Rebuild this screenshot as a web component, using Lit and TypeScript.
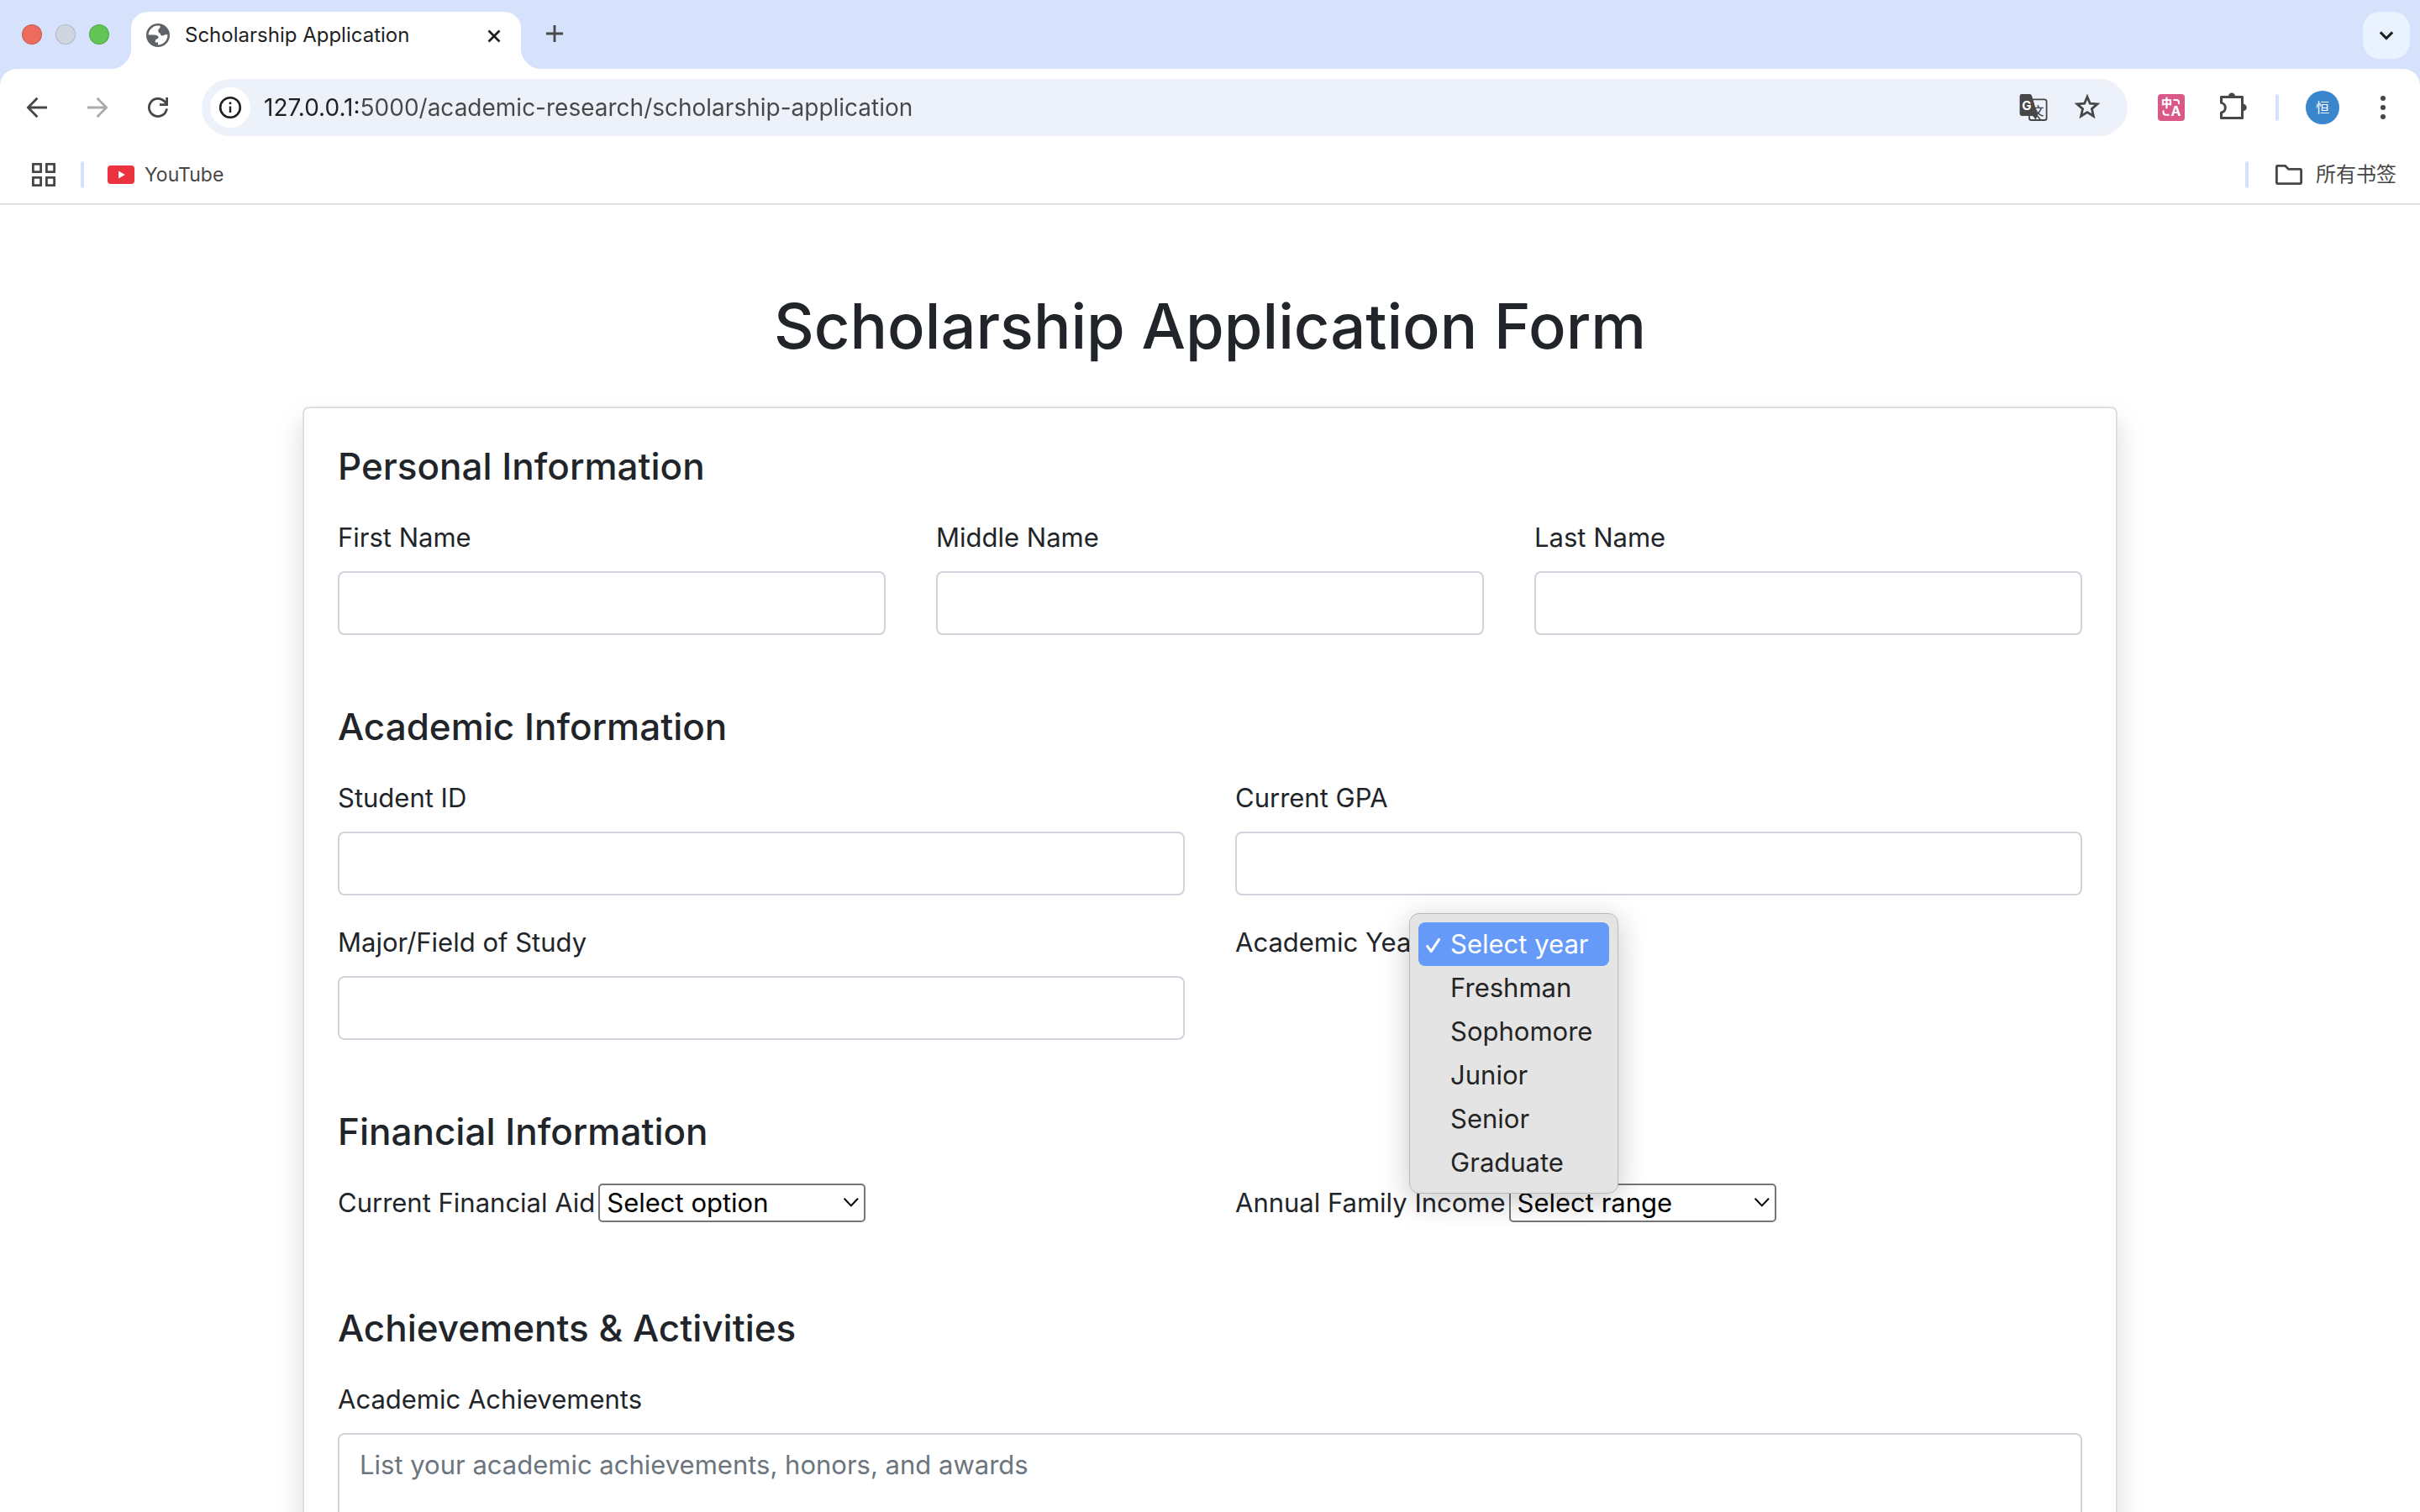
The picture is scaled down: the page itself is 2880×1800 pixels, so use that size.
import { LitElement, html, svg, css, nothing } from "lit";
import { customElement, state } from "lit/decorators.js";

const glyph = (body: unknown, size = 40) =>
  html`<svg class="glyph" width=${size} height=${size} viewBox="0 0 ${size} ${size}" aria-hidden="true">${body}</svg>`;

const icons = {
  globe: svg`
    <circle cx="14" cy="14" r="13" fill="#fff" />
    <path fill="#5f6368" d="M17 1.5L16.6 4.5C16.2 6 14.6 6.2 14.4 7.6V9.8C14.6 11.4 16.8 11 17 12.8C17.2 14.8 20.2 15 21.4 13.8C22.6 12.8 24.2 13.6 26.4 13A13 13 0 0 0 17 1.5Z" />
    <path fill="#5f6368" d="M1.8 13.6H8.4C11.2 13.6 14.6 14.4 14.6 16.6C14.6 18.8 11 18.2 10.8 20.6V22.4H14V26.4A12.8 12.8 0 0 1 1.8 13.6Z" />
    <circle cx="14" cy="14" r="12.7" fill="none" stroke="#5f6368" stroke-width="2.6" />`,
  close: svg`<path d="M13.5 14.5L26.5 27.5M26.5 14.5L13.5 27.5" stroke="#1f1f1f" stroke-width="2.8" fill="none" />`,
  plus: svg`<path d="M20 10V30M10 20H30" stroke="#474747" stroke-width="2.8" fill="none" />`,
  chevron: svg`<path d="M12.8 16.4L20 23.6L27.2 16.4" stroke="#1f1f1f" stroke-width="3" fill="none" />`,
  back: svg`<path d="M32 20H10M20.4 8.8L9.4 20L20.4 31.2" stroke="#474747" stroke-width="2.8" fill="none" />`,
  forward: svg`<path d="M8 20H30M19.6 8.8L30.6 20L19.6 31.2" stroke="#ababab" stroke-width="2.8" fill="none" />`,
  reload: svg`<path d="M30.5 21.4A10.6 10.6 0 1 1 27.6 12.6L30.4 15.4M30.6 8V16.6H22" stroke="#474747" stroke-width="2.8" fill="none" />`,
  info: svg`
    <circle cx="20" cy="20" r="11.8" stroke="#1f1f1f" stroke-width="2.6" fill="none" />
    <path d="M20 18.6V26" stroke="#1f1f1f" stroke-width="2.4" />
    <circle cx="20" cy="14.8" r="1.5" fill="#1f1f1f" />`,
  translate: svg`
    <rect x="15" y="10.4" width="20.6" height="24.6" rx="2.6" fill="none" stroke="#474747" stroke-width="1.8" />
    <text x="25.4" y="28.8" font-size="14" font-weight="500" text-anchor="middle" fill="#474747">文</text>
    <path d="M6 4H15.6Q17.4 4 18 5.8L25 29L22.6 34.4L19.4 30H6Q3.6 30 3.6 27.6V6.4Q3.6 4 6 4Z" fill="#474747" />
    <path d="M22.6 27.4L28.6 35" stroke="#474747" stroke-width="1.6" />
    <text x="12" y="23.4" font-size="15" font-weight="700" text-anchor="middle" fill="#fff">G</text>`,
  star: svg`<path d="M20 7.2L23.3 15.2L32 15.9L25.4 21.6L27.4 30.2L20 25.6L12.6 30.2L14.6 21.6L8 15.9L16.7 15.2Z" stroke="#474747" stroke-width="2.8" fill="none" />`,
  pink: svg`
    <rect x="4" y="4" width="32" height="32" rx="4" fill="#d95888" />
    <text x="14.4" y="19.2" font-size="13" font-weight="900" text-anchor="middle" fill="#fff">中</text>
    <text x="25.6" y="29.8" font-size="16" font-weight="700" text-anchor="middle" fill="#fff">A</text>
    <path d="M22.4 11H26Q29 11 29 14.4V16" stroke="#fff" stroke-width="2" fill="none" />
    <path d="M10.6 23.4V25.4Q10.6 28.8 14 28.8H17.6" stroke="#fff" stroke-width="2" fill="none" />`,
  puzzle: svg`
    <path d="M7.5 7.5H32.5V32.5H7.5V26A5.9 5.9 0 0 0 7.5 14.4Z" stroke="#474747" stroke-width="3" stroke-linejoin="round" fill="none" />
    <path d="M15.8 7A4.2 4.6 0 0 1 24.2 7Z" fill="#474747" />
    <path d="M33 15.6A4.8 4.4 0 0 1 33 24.4Z" fill="#474747" />`,
  more: svg`<g fill="#474747"><circle cx="20" cy="9" r="3" /><circle cx="20" cy="20" r="3" /><circle cx="20" cy="31" r="3" /></g>`,
  apps: svg`<path d="M7.4 7.4H16.6V16.6H7.4ZM23.4 7.4H32.6V16.6H23.4ZM7.4 23.4H16.6V32.6H7.4ZM23.4 23.4H32.6V32.6H23.4Z" stroke="#474747" stroke-width="2.8" fill="none" />`,
  youtube: svg`
    <rect x="0" y="5" width="32" height="22" rx="4" fill="#eb323f" />
    <path d="M13 11.6L20.8 16L13 20.4Z" fill="#fff" />`,
  folder: svg`<path d="M1.4 6.4Q1.4 5.4 2.4 5.4H11.6L15.6 9.4H29.6Q30.6 9.4 30.6 10.4V25.6Q30.6 26.6 29.6 26.6H2.4Q1.4 26.6 1.4 25.6Z" stroke="#474747" stroke-width="2.8" fill="none" />`,
  arrow: svg`<path d="M10.6 12.8L18.8 21.4L27 12.8" stroke="#000" stroke-width="2" fill="none" />`,
  check: svg`<path d="M2.6 14.4L7.2 20.6L16.6 6.4" stroke="#fff" stroke-width="3" stroke-linecap="round" stroke-linejoin="round" fill="none" />`,
};

@customElement("browser-chrome")
export class BrowserChrome extends LitElement {
  static styles = css`
    :host {
      display: block;
      flex: none;
      background: #d6e2fc;
      border-bottom: 2px solid #e0e0e0;
      font-family: Inter, "Noto Sans CJK SC", sans-serif;
      font-size: 24px;
      line-height: 32px;
      color: #474747;
    }
    .glyph {
      display: block;
      flex: none;
      font-family: Inter, "Noto Sans CJK SC", sans-serif;
    }
    button {
      display: grid;
      place-items: center;
      flex: none;
      margin: 0;
      padding: 0;
      border: 0;
      background: none;
      color: inherit;
      font: inherit;
    }
    .strip {
      display: flex;
      align-items: flex-start;
      padding: 14px 12px 0 26px;
    }
    .lights {
      display: flex;
      gap: 16px;
      padding-top: 15px;
      margin-right: 2px;
    }
    .light {
      width: 24px;
      height: 24px;
      box-sizing: border-box;
      border: 1px solid rgba(0, 0, 0, 0.14);
      border-radius: 50%;
    }
    .red { background: #ed6a5e; }
    .idle { background: #d0d5e2; }
    .green { background: #61c454; }
    .flare {
      align-self: flex-end;
      width: 24px;
      height: 24px;
    }
    .before { background: radial-gradient(circle at 0 0, transparent 24px, #fff 24px); }
    .after { background: radial-gradient(circle at 100% 0, transparent 24px, #fff 24px); }
    .tab {
      display: flex;
      align-items: center;
      gap: 18px;
      width: 464px;
      height: 68px;
      box-sizing: border-box;
      padding: 0 12px 12px 18px;
      border-radius: 20px 20px 0 0;
      background: #fff;
      color: #1f1f1f;
    }
    .tab-title { flex: 1; }
    .small { width: 40px; height: 40px; }
    .new-tab { margin: 6px 0 0 -4px; }
    .search-tabs {
      width: 56px;
      height: 56px;
      margin-left: auto;
      border-radius: 20px;
      background: #eaf2fd;
    }
    .toolbar {
      display: flex;
      align-items: center;
      gap: 16px;
      padding: 12px 16px;
      border-radius: 20px 20px 0 0;
      background: #fff;
    }
    .tool { width: 56px; height: 56px; }
    .omnibox {
      display: flex;
      flex: 1;
      align-items: center;
      gap: 8px;
      height: 68px;
      margin: 0 8px;
      padding: 0 20px 0 10px;
      border-radius: 34px;
      background: #edf2fa;
    }
    .site-info {
      width: 48px;
      height: 48px;
      margin-right: 8px;
      border-radius: 50%;
      background: #fff;
    }
    .url {
      flex: 1;
      min-width: 0;
      padding: 0;
      border: 0;
      outline: 0;
      font: inherit;
      font-size: 28px;
      color: #474747;
      background: linear-gradient(90deg, #1f1f1f 116px, #474747 116px);
      -webkit-background-clip: text;
      background-clip: text;
      -webkit-text-fill-color: transparent;
    }
    .rule {
      flex: none;
      width: 4px;
      height: 32px;
      border-radius: 2px;
      background: #d6e2fc;
    }
    .toolbar .rule { margin: 0 8px; }
    .avatar {
      display: grid;
      place-items: center;
      width: 40px;
      height: 40px;
      border-radius: 50%;
      background: #3a86cc;
      color: #fff;
      font-size: 16px;
      line-height: 24px;
    }
    .bookmarks {
      display: flex;
      align-items: center;
      height: 68px;
      padding: 0 28px 0 24px;
      background: #fff;
    }
    .bookmarks .tool { margin-right: 16px; }
    .bookmark {
      display: flex;
      align-items: center;
      gap: 12px;
      margin-left: 28px;
      color: inherit;
      font-size: 23px;
      text-decoration: none;
    }
    .end { margin-left: auto; }
    .all {
      display: flex;
      gap: 16px;
      margin-left: 32px;
    }
  `;

  render() {
    return html`
      <div class="strip">
        <div class="lights">
          <span class="light red"></span><span class="light idle"></span><span class="light green"></span>
        </div>
        <span class="flare before"></span>
        <div class="tab">
          ${glyph(icons.globe, 28)}
          <span class="tab-title">Scholarship Application</span>
          <button class="small" aria-label="Close tab">${glyph(icons.close)}</button>
        </div>
        <span class="flare after"></span>
        <button class="small new-tab" aria-label="New tab">${glyph(icons.plus)}</button>
        <button class="search-tabs" aria-label="Search tabs">${glyph(icons.chevron)}</button>
      </div>
      <div class="toolbar">
        <button class="tool" aria-label="Back">${glyph(icons.back)}</button>
        <button class="tool" aria-label="Forward">${glyph(icons.forward)}</button>
        <button class="tool" aria-label="Reload">${glyph(icons.reload)}</button>
        <div class="omnibox">
          <button class="site-info" aria-label="Site information">${glyph(icons.info)}</button>
          <input class="url" type="text" aria-label="Address" .value=${"127.0.0.1:5000/academic-research/scholarship-application"} />
          <button class="tool" aria-label="Translate page">${glyph(icons.translate)}</button>
          <button class="tool" aria-label="Bookmark page">${glyph(icons.star)}</button>
        </div>
        <button class="tool" aria-label="Translator extension">${glyph(icons.pink)}</button>
        <button class="tool" aria-label="Extensions">${glyph(icons.puzzle)}</button>
        <span class="rule"></span>
        <button class="tool" aria-label="Profile"><span class="avatar">恒</span></button>
        <button class="tool" aria-label="Menu">${glyph(icons.more)}</button>
      </div>
      <div class="bookmarks">
        <button class="tool" aria-label="Apps">${glyph(icons.apps)}</button>
        <span class="rule"></span>
        <a class="bookmark" href="#youtube">${glyph(icons.youtube, 32)}<span>YouTube</span></a>
        <span class="rule end"></span>
        <button class="all">${glyph(icons.folder, 32)}<span>所有书签</span></button>
      </div>
    `;
  }
}

const years = ["Select year", "Freshman", "Sophomore", "Junior", "Senior", "Graduate"];

@customElement("scholarship-form")
export class ScholarshipForm extends LitElement {
  @state() private year = years[0];
  @state() private open = true;

  static styles = css`
    :host {
      display: block;
      padding: 96px 0;
      font-family: Inter, "Noto Sans CJK SC", sans-serif;
      font-size: 31px;
      line-height: 48px;
      color: #212529;
    }
    .glyph { display: block; flex: none; }
    h1, h2 { margin: 0; font-weight: 500; }
    h1 {
      margin-bottom: 48px;
      font-size: 74px;
      line-height: 96px;
      text-align: center;
    }
    h2 {
      margin-bottom: 32px;
      font-size: 44px;
      line-height: 58px;
    }
    .card {
      width: 75%;
      box-sizing: border-box;
      margin: 0 auto;
      padding: 40px;
      border: 2px solid #dfdfdf;
      border-radius: 8px;
      background: #fff;
      box-shadow: 0 16px 32px rgba(0, 0, 0, 0.15);
    }
    section { margin-bottom: 48px; }
    .row {
      display: grid;
      grid-template-columns: repeat(2, minmax(0, 1fr));
      column-gap: 60px;
    }
    .thirds { grid-template-columns: repeat(3, minmax(0, 1fr)); }
    .field {
      display: flex;
      flex-direction: column;
      gap: 16px;
      margin-bottom: 32px;
    }
    .inline {
      display: flex;
      align-items: center;
      align-self: start;
      gap: 4px;
      height: 48px;
      margin-bottom: 48px;
    }
    .box {
      display: block;
      width: 100%;
      min-height: 76px;
      box-sizing: border-box;
      margin: 0;
      padding: 12px 24px;
      border: 2px solid #ced4da;
      border-radius: 8px;
      background: #fff;
      color: #495057;
      font: inherit;
      resize: none;
    }
    .box::placeholder { color: #6c757d; opacity: 1; }
    .pick { display: grid; align-items: center; }
    .pick > * { grid-area: 1 / 1; }
    .pick > .glyph { justify-self: end; pointer-events: none; }
    select {
      appearance: none;
      width: 318px;
      height: 46px;
      margin: 0;
      padding: 0 8px;
      border: 2px solid #767676;
      border-radius: 5px;
      background: #fff;
      color: #000;
      font: inherit;
      line-height: 40px;
    }
    .year { position: relative; }
    .year select { width: 224px; }
    .menu {
      position: absolute;
      z-index: 2;
      top: -12px;
      left: -18px;
      width: 249px;
      box-sizing: border-box;
      padding: 10px;
      border: 1px solid #b9b9b9;
      border-radius: 12px;
      background: #e4e4e4;
      box-shadow: 0 8px 36px rgba(0, 0, 0, 0.22);
    }
    .option {
      display: grid;
      grid-template-columns: 38px 1fr;
      align-items: center;
      width: 100%;
      height: 52px;
      margin: 0;
      padding: 0;
      border: 0;
      border-radius: 8px;
      background: none;
      color: #242424;
      font: inherit;
      text-align: left;
    }
    .option > .glyph { margin-left: 8px; }
    .option > span { grid-column: 2; white-space: nowrap; }
    .chosen { background: #659af8; color: #fff; }
  `;

  private choose(year: string) {
    this.year = year;
    this.open = false;
  }

  private text(id: string, label: string) {
    return html`<div class="field">
      <label for=${id}>${label}</label>
      <input class="box" id=${id} type="text" />
    </div>`;
  }

  private drop(id: string, label: string, options: string[]) {
    return html`<div class="inline">
      <label for=${id}>${label}</label>
      <div class="pick">
        <select id=${id}>${options.map((o) => html`<option>${o}</option>`)}</select>
        ${glyph(icons.arrow, 36)}
      </div>
    </div>`;
  }

  render() {
    return html`
      <h1>Scholarship Application Form</h1>
      <form class="card">
        <section>
          <h2>Personal Information</h2>
          <div class="row thirds">
            ${this.text("first", "First Name")} ${this.text("middle", "Middle Name")} ${this.text("last", "Last Name")}
          </div>
        </section>
        <section>
          <h2>Academic Information</h2>
          <div class="row">
            ${this.text("student", "Student ID")} ${this.text("gpa", "Current GPA")} ${this.text("major", "Major/Field of Study")}
            <div class="inline">
              <label for="year">Academic Year</label>
              <div class="year">
                <div class="pick">
                  <select id="year" .value=${this.year} @mousedown=${() => (this.open = true)}>
                    ${years.map((y) => html`<option ?selected=${y === this.year}>${y}</option>`)}
                  </select>
                </div>
                ${this.open
                  ? html`<div class="menu" role="listbox" aria-label="Academic Year">
                      ${years.map(
                        (y) => html`<button
                          type="button"
                          role="option"
                          aria-selected=${y === this.year}
                          class="option ${y === this.year ? "chosen" : ""}"
                          @click=${() => this.choose(y)}
                        >
                          ${y === this.year ? glyph(icons.check, 24) : nothing}<span>${y}</span>
                        </button>`,
                      )}
                    </div>`
                  : nothing}
              </div>
            </div>
          </div>
        </section>
        <section>
          <h2>Financial Information</h2>
          <div class="row">
            ${this.drop("aid", "Current Financial Aid", ["Select option"])}
            ${this.drop("income", "Annual Family Income", ["Select range"])}
          </div>
        </section>
        <section>
          <h2>Achievements &amp; Activities</h2>
          <div class="field">
            <label for="achievements">Academic Achievements</label>
            <textarea class="box" id="achievements" rows="3" placeholder="List your academic achievements, honors, and awards"></textarea>
          </div>
        </section>
      </form>
    `;
  }
}

@customElement("app-root")
export class AppRoot extends LitElement {
  static styles = css`
    :host {
      display: flex;
      flex-direction: column;
      height: 100vh;
      background: #fff;
    }
    .page {
      flex: 1;
      min-height: 0;
      overflow-y: auto;
      scrollbar-width: none;
    }
  `;

  render() {
    return html`
      <browser-chrome></browser-chrome>
      <main class="page"><scholarship-form></scholarship-form></main>
    `;
  }
}
